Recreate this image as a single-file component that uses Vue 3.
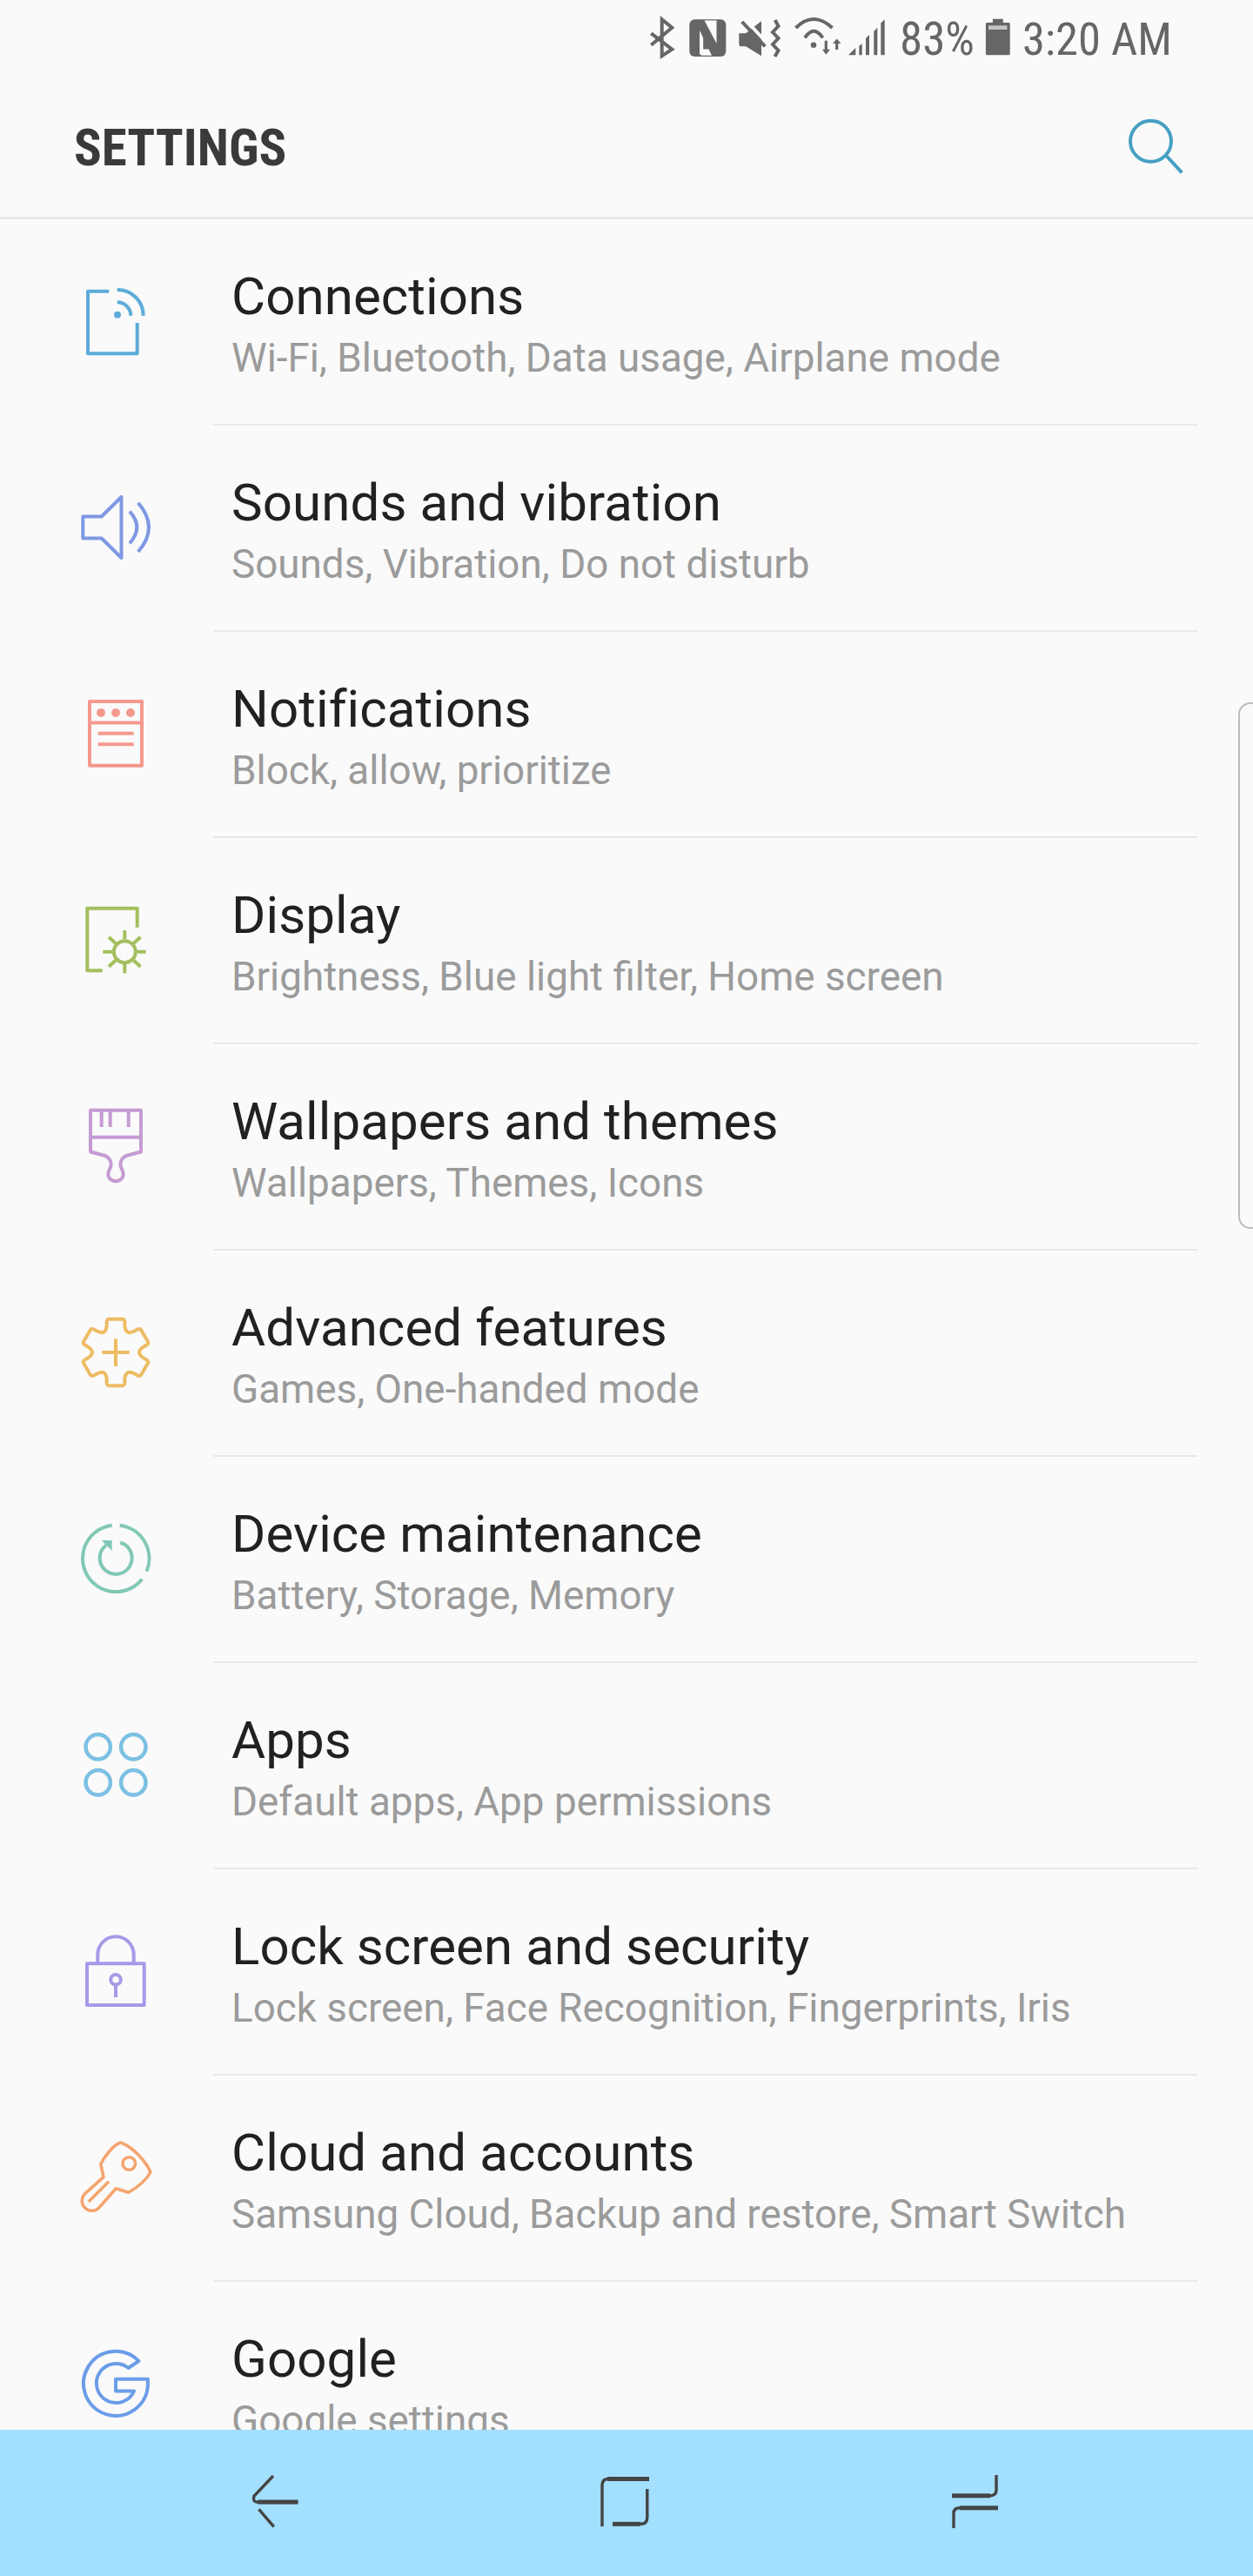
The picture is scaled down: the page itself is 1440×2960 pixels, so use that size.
<script setup>
function gearPath(cx, cy) {
  const base = [
    [10.3, 33], [11, 38.2], [7.5, 38.2], [-7.5, 38.2], [-11, 38.2], [-10.3, 33], [-10.2, 17.6]
  ]
  const pts = (k) => base.map(([x, y]) => {
    const a = (Math.PI / 3) * k
    return [
      (cx + x * Math.cos(a) - y * Math.sin(a)).toFixed(2),
      (cy + x * Math.sin(a) + y * Math.cos(a)).toFixed(2)
    ]
  })
  let d = ''
  for (let k = 0; k < 6; k++) {
    const p = pts(k)
    const next = pts(k + 1)
    d += `${k === 0 ? 'M' : 'L'}${p[0].join(' ')} Q${p[1].join(' ')} ${p[2].join(' ')} L${p[3].join(' ')} Q${p[4].join(' ')} ${p[5].join(' ')} Q${p[6].join(' ')} ${next[0].join(' ')} `
  }
  return d + 'Z'
}

const items = [
  {
    title: 'Connections', sub: 'Wi-Fi, Bluetooth, Data usage, Airplane mode', color: '#5dabd9', sw: 4,
    paths: ['M125.3 334.7H101V406.3H157.7V371', 'M134.7 333A29.5 29.5 0 0 1 164.7 362.7', 'M134.7 347.3A15.5 15.5 0 0 1 150.3 362.7'],
    dots: [[135, 361.7, 4]]
  },
  {
    title: 'Sounds and vibration', sub: 'Sounds, Vibration, Do not disturb', color: '#7e98e3', sw: 4,
    paths: ['M95.3 593.5H116.7L139.5 571V641L116.7 618.5H95.3Z', 'M149 587.7Q165.6 606 149 624.3', 'M158.7 577.7Q183.3 606 158.7 634']
  },
  {
    title: 'Notifications', sub: 'Block, allow, prioritize', color: '#f4998d', sw: 4,
    paths: ['M103 806H163V879.7H103Z', 'M103 830.5H163', 'M112.7 842.7H153.7', 'M112.7 855.3H153.7'],
    dots: [[116, 819, 5], [133, 819, 5], [150, 819, 5]]
  },
  {
    title: 'Display', sub: 'Brightness, Blue light filter, Home screen', color: '#a3bf5e', sw: 4,
    paths: ['M117.7 1115.3H100.3V1043.7H157.7V1065.7', 'M143.3 1069V1079', 'M143.3 1108V1118.3', 'M118.3 1093.7H129', 'M157.5 1093.7H167.7', 'M125 1076.7L133 1084', 'M161.5 1076.7L153.5 1084', 'M125 1110.7L133 1103.4', 'M161.5 1110.7L153.5 1103.4'],
    rings: [[143.3, 1093.7, 12.5]]
  },
  {
    title: 'Wallpapers and themes', sub: 'Wallpapers, Themes, Icons', color: '#c59bd3', sw: 4,
    paths: ['M104 1275.7H162V1323.5L147 1327.5C141 1329 138 1334 138.5 1339C139 1343 141.7 1345 141.7 1349C141.7 1354 137.5 1357.3 133 1357.3C128.5 1357.3 124.3 1354 124.3 1349C124.3 1345 127 1343 127.5 1339C128 1334 125 1329 119 1327.5L104 1323.5Z', 'M104 1306.7H162', 'M116.7 1275.7V1295', 'M126.7 1275.7V1295', 'M147.7 1275.7V1295']
  },
  {
    title: 'Advanced features', sub: 'Games, One-handed mode', color: '#edbc63', sw: 4,
    paths: [gearPath(133, 1554), 'M117.3 1554H148.7', 'M133 1538.3V1570']
  },
  {
    title: 'Device maintenance', sub: 'Battery, Storage, Memory', color: '#82c8b6', sw: 4,
    paths: ['M137.7 1752.7A38.3 38.3 0 0 1 168.5 1805.5', 'M163.3 1814.5A38.3 38.3 0 1 1 128.7 1752.7', 'M138.3 1772.5A18.5 18.5 0 1 1 122 1775.5'],
    fills: ['M116.7 1770H128.7V1782Z']
  },
  {
    title: 'Apps', sub: 'Default apps, App permissions', color: '#7cc0e4', sw: 4.5,
    rings: [[112.7, 2007.3, 14.2], [153.3, 2007.3, 14.2], [112.7, 2048.3, 14.2], [153.3, 2048.3, 14.2]]
  },
  {
    title: 'Lock screen and security', sub: 'Lock screen, Face Recognition, Fingerprints, Iris', color: '#a899e8', sw: 4,
    paths: ['M100 2256.3H165.7V2304H100Z', 'M112.3 2256V2246A20.7 20.7 0 0 1 153.7 2246V2256', 'M133 2280V2295'],
    rings: [[133, 2274.7, 5.8]]
  },
  {
    title: 'Cloud and accounts', sub: 'Samsung Cloud, Backup and restore, Smart Switch', color: '#f5a56f', sw: 3.6,
    paths: ['M138.3 2462C152 2466 168 2484 173 2496C168 2505 157 2514 147.7 2519.3L133.3 2514.7L113.1 2537.6A11.5 11.5 0 0 1 96.9 2521.4L119 2501.7L115.7 2486.7C120 2478 130 2465 138.3 2462Z', 'M101.7 2530L125 2506.7'],
    rings: [[148.3, 2486, 7.3]]
  },
  {
    title: 'Google', sub: 'Google settings', color: '#6b9de8', sw: 4,
    paths: ['M159.5 2713A37 37 0 1 0 169.9 2741V2733.7H133V2747.5H154A22.5 22.5 0 1 1 147.5 2721Z']
  }
]

const viewBoxFor = (i) => `83 ${319 + 237 * i} 100 100`
</script>

<template>
  <div class="phone">
    <div class="status">
      <svg class="st-icons" viewBox="740 15 280 55" width="280" height="55" aria-hidden="true">
        <path d="M748.3 38.3L772.3 56.7L760.7 64.3V22.3L772.3 31.7L748.3 51.7" class="st-line" />
        <rect x="792.3" y="22.3" width="42" height="42.7" rx="6" fill="#666" />
        <path d="M809.5 23.6H823.5V50Z" fill="#fafafa" />
        <path d="M804 35L818 63.8H807Q804 63.8 804 60Z" fill="#fafafa" />
        <path d="M808.2 42L815 56.5H808.2Z" fill="#666" />
        <path d="M849.3 38.3H857L875 24.3V64.3L857 53.3H851Q849.3 53 849.3 51Z" fill="#666" />
        <path d="M856 22L883 51" stroke="#fafafa" stroke-width="4" fill="none" />
        <path d="M852.7 25L879.3 53.3" class="st-line" />
        <path d="M890.7 23L894.5 30L888 37L894.5 44L888 51L894.5 58L890.5 65" class="st-line" />
        <path d="M914.5 32Q935 12 956.5 32" class="st-line" />
        <path d="M925 43.5Q935.3 28 945.5 43.5" class="st-line" />
        <circle cx="935" cy="51.7" r="3.3" fill="#666" />
        <path d="M949.3 46.7V58" class="st-line thin" />
        <path d="M945 56.7H954L949.3 62.7Z" fill="#666" />
        <path d="M961.7 48V57" class="st-line thin" />
        <path d="M957 50H966.5L961.7 44.5Z" fill="#666" />
        <path d="M975 63.3L983.3 55V63.3Z" fill="#666" />
        <path d="M987.3 53L990.7 50V63.3H987.3Z" fill="#666" />
        <path d="M995 44L999 40V63.3H995Z" fill="#666" />
        <path d="M1004.3 36L1008.3 31.7V63.3H1004.3Z" fill="#666" />
        <path d="M1012.3 26.5L1016.7 22.3V63.3H1012.3Z" fill="#666" />
      </svg>
      <span class="st-text pct">83%</span>
      <svg class="st-batt" viewBox="1130 20 30 46" width="30" height="46" aria-hidden="true">
        <path d="M1138.9 21.7H1150.7V26H1157.2Q1158.7 26 1158.7 27.5V61.8Q1158.7 63.3 1157.2 63.3H1132.4Q1130.9 63.3 1130.9 61.8V27.5Q1130.9 26 1132.4 26H1138.9Z" fill="#666" />
        <rect x="1134" y="29.3" width="21.4" height="4.7" fill="#c4c4c4" />
      </svg>
      <span class="st-text time">3:20 AM</span>
    </div>

    <header class="head">
      <h1 class="head-title">SETTINGS</h1>
      <svg class="search" viewBox="1290 132 75 75" width="75" height="75" aria-hidden="true">
        <circle cx="1322.5" cy="162.2" r="23.5" fill="none" stroke="#46a0c3" stroke-width="4" />
        <path d="M1340.4 179L1358.3 198.3" stroke="#46a0c3" stroke-width="4" fill="none" />
      </svg>
    </header>

    <main class="list">
      <div v-for="(item, i) in items" :key="item.title" class="row">
        <div class="icon-cell">
          <svg class="icon" :viewBox="viewBoxFor(i)" width="100" height="100" aria-hidden="true">
            <g fill="none" :stroke="item.color" :stroke-width="item.sw" stroke-linejoin="round">
              <path v-for="d in item.paths" :key="d" :d="d" />
              <circle v-for="r in item.rings" :key="r.join()" :cx="r[0]" :cy="r[1]" :r="r[2]" />
            </g>
            <circle v-for="c in item.dots" :key="c.join()" :cx="c[0]" :cy="c[1]" :r="c[2]" :fill="item.color" />
            <path v-for="d in item.fills" :key="d" :d="d" :fill="item.color" />
          </svg>
        </div>
        <div class="row-body">
          <div class="row-title">{{ item.title }}</div>
          <div class="row-sub">{{ item.sub }}</div>
        </div>
      </div>
    </main>

    <nav class="nav">
      <svg class="nav-icon" viewBox="280 2835 70 80" width="70" height="80" aria-hidden="true">
        <path d="M314 2845L292 2868Q290 2875 296 2875" class="nv-thin" />
        <path d="M296 2875H342.6" class="nv-thick" />
        <path d="M297.5 2883.3L314.7 2903.3" class="nv-thin" />
      </svg>
      <svg class="nav-icon" viewBox="680 2835 80 80" width="80" height="80" aria-hidden="true">
        <path d="M746 2848.5H698" class="nv-thick" />
        <path d="M692 2903V2856Q692 2848.5 699 2848.5" class="nv-thin" />
        <path d="M704 2900.3H736" class="nv-thick" />
        <path d="M743.8 2860V2893Q743.8 2900.3 736 2900.3" class="nv-thin" />
      </svg>
      <svg class="nav-icon" viewBox="1085 2835 70 80" width="70" height="80" aria-hidden="true">
        <path d="M1145 2844V2861Q1145 2867.7 1138 2867.7" class="nv-thin" />
        <path d="M1138 2867.7H1094" class="nv-thick" />
        <path d="M1147 2881.7H1103" class="nv-thick" />
        <path d="M1103 2881.7Q1096 2881.7 1096 2888V2905" class="nv-thin" />
      </svg>
    </nav>

    <div class="edge"></div>
  </div>
</template>

<style scoped>
.phone {
  position: relative;
  width: 1440px;
  height: 2960px;
  display: flex;
  flex-direction: column;
  overflow: hidden;
  background: #fafafa;
  font-family: Roboto, "Liberation Sans", sans-serif;
}
.status {
  height: 90px;
  flex: none;
  display: flex;
  align-items: flex-start;
  padding-left: 740px;
  box-sizing: border-box;
}
.st-icons {
  flex: none;
  margin-top: 15px;
}
.st-line {
  fill: none;
  stroke: #666;
  stroke-width: 4;
}
.st-line.thin {
  stroke-width: 3.2;
}
.st-text {
  display: inline-block;
  color: #666;
  font-size: 53px;
  line-height: 60px;
  margin-top: 15px;
  font-stretch: 75%;
  white-space: nowrap;
}
.pct {
  margin-left: 14px;
}
.st-batt {
  flex: none;
  margin-top: 20px;
  margin-left: 12px;
}
.time {
  margin-left: 13px;
  font-size: 52.5px;
}
.head {
  height: 159px;
  flex: none;
  box-sizing: border-box;
  display: flex;
  align-items: center;
  justify-content: space-between;
  padding: 0 75px 0 85px;
}
.head-title {
  margin: 0;
  font-size: 59px;
  font-weight: 700;
  line-height: 70px;
  color: #3a3a3a;
  font-stretch: 75%;
}
.list {
  flex: 1;
  min-height: 0;
  overflow: hidden;
  border-top: 3px solid #e8e8e8;
}
.row {
  height: 237px;
  display: flex;
}
.icon-cell {
  width: 245px;
  flex: none;
}
.icon {
  display: block;
  margin: 67px 0 0 83px;
}
.row-body {
  flex: 1;
  margin-right: 64px;
  padding: 6px 0 0 21px;
  box-sizing: border-box;
  border-bottom: 2px solid #e8e8e8;
  display: flex;
  flex-direction: column;
  justify-content: center;
  gap: 8px;
}
.row-title {
  font-size: 60px;
  line-height: 70px;
  color: #212121;
  letter-spacing: 0.1px;
}
.row-sub {
  font-size: 45.8px;
  line-height: 56px;
  color: #9b9b9b;
}
.nav {
  position: relative;
  height: 168px;
  flex: none;
  background: #a3dfff;
}
.nav-icon {
  position: absolute;
  top: 43px;
}
.nav-icon:nth-child(1) {
  left: 280px;
}
.nav-icon:nth-child(2) {
  left: 680px;
}
.nav-icon:nth-child(3) {
  left: 1085px;
}
.nv-thin {
  fill: none;
  stroke: #444;
  stroke-width: 3.4;
}
.nv-thick {
  fill: none;
  stroke: #444;
  stroke-width: 5;
}
.edge {
  position: absolute;
  left: 1423px;
  top: 807px;
  width: 30px;
  height: 605px;
  box-sizing: border-box;
  border: 2px solid #bdbdbd;
  border-radius: 14px;
}
</style>
